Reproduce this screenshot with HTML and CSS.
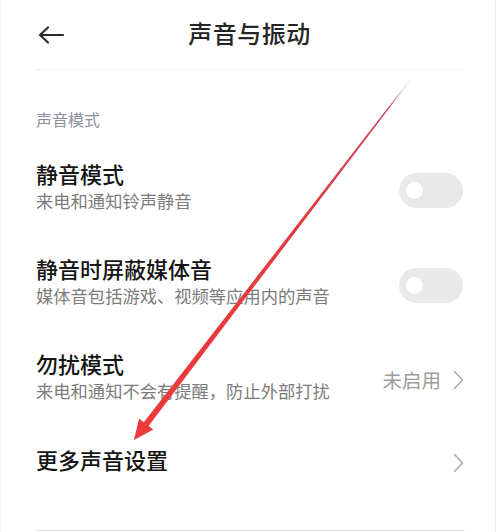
FILE: index.html
```html
<!DOCTYPE html>
<html lang="zh-CN">
<head>
<meta charset="utf-8">
<title>声音与振动</title>
<link rel="stylesheet" href="styles.css">
</head>
<body>
<div class="page">
  <header class="header">
    <svg class="back" width="26" height="18" viewBox="0 0 26 18">
      <path d="M25 9 H2 M10 1.5 L2 9 L10 16.5" fill="none" stroke="#2b2b2b" stroke-width="2.2" stroke-linecap="round" stroke-linejoin="round"/>
    </svg>
    <h1 class="title">声音与振动</h1>
    <span class="spacer"></span>
  </header>
  <div class="divider"></div>

  <div class="section-label">声音模式</div>

  <div class="row">
    <div class="texts">
      <div class="row-title">静音模式</div>
      <div class="row-sub">来电和通知铃声静音</div>
    </div>
    <div class="toggle"><span class="knob"></span></div>
  </div>

  <div class="row">
    <div class="texts">
      <div class="row-title">静音时屏蔽媒体音</div>
      <div class="row-sub">媒体音包括游戏、视频等应用内的声音</div>
    </div>
    <div class="toggle"><span class="knob"></span></div>
  </div>

  <div class="row">
    <div class="texts">
      <div class="row-title">勿扰模式</div>
      <div class="row-sub">来电和通知不会有提醒，防止外部打扰</div>
    </div>
    <div class="value">
      <span class="value-text">未启用</span>
      <svg class="chev" width="11" height="20" viewBox="0 0 11 20"><path d="M1.5 1.5 L9.5 10 L1.5 18.5" fill="none" stroke="#ababab" stroke-width="1.6" stroke-linecap="round" stroke-linejoin="round"/></svg>
    </div>
  </div>

  <div class="row single">
    <div class="texts">
      <div class="row-title">更多声音设置</div>
    </div>
    <div class="value">
      <svg class="chev" width="11" height="20" viewBox="0 0 11 20"><path d="M1.5 1.5 L9.5 10 L1.5 18.5" fill="none" stroke="#ababab" stroke-width="1.6" stroke-linecap="round" stroke-linejoin="round"/></svg>
    </div>
  </div>

  <div class="divider bottom"></div>
</div>

<svg class="annotation" width="500" height="532" viewBox="0 0 500 532">
  <defs>
    <linearGradient id="arrowGrad" gradientUnits="userSpaceOnUse" x1="410" y1="80" x2="134" y2="440">
      <stop offset="0" stop-color="#f2d4d8" stop-opacity="0.4"/>
      <stop offset="0.08" stop-color="#c9405c"/>
      <stop offset="0.35" stop-color="#e23a42"/>
      <stop offset="1" stop-color="#ec3b3b"/>
    </linearGradient>
  </defs>
  <polygon points="409.6,79.7 410.4,80.3 148.6,425.9 153.3,429.6 134,440 139.1,418.6 143.8,422.3" fill="url(#arrowGrad)"/>
</svg>
</body>
</html>
```

FILE: styles.css
```css
html, body {
  margin: 0;
  padding: 0;
  background: #ffffff;
}

body {
  width: 500px;
  height: 532px;
  overflow: hidden;
  position: relative;
  font-family: "Noto Sans CJK SC", "Noto Sans", sans-serif;
}

.page {
  box-sizing: border-box;
  width: 496px;
  height: 532px;
  border-left: 1px solid #f0f0f0;
  border-right: 1px solid #ececec;
  padding: 0 32px 0 35px;
  background: #ffffff;
}

.header {
  height: 69px;
  display: grid;
  grid-template-columns: 1fr auto 1fr;
  align-items: center;
}

.back {
  margin-left: 2px;
  display: block;
}

.title {
  margin: 0 0 4px;
  font-size: 24px;
  line-height: 32px;
  font-weight: 500;
  color: #252525;
  letter-spacing: 0.5px;
}

.divider {
  height: 1px;
  background: #efefef;
  margin-right: -2px;
}

.divider.bottom {
  margin-top: 33px;
  background: #e4e4e4;
}

.section-label {
  margin-top: 38px;
  font-size: 16px;
  line-height: 22px;
  color: #8c8f9e;
}

.row {
  display: flex;
  align-items: center;
  justify-content: space-between;
  padding: 20px 0 21px;
}

.section-label + .row {
  margin-top: 13px;
}

.row.single {
  padding: 21px 0 21px;
}

.texts {
  margin: -3px 0 3px;
}

.row-title {
  font-size: 22px;
  line-height: 27px;
  font-weight: 500;
  color: #151515;
}

.row-sub {
  margin-top: 1px;
  font-size: 17.3px;
  line-height: 26px;
  color: #7c7c7c;
}

.toggle {
  width: 64px;
  height: 35px;
  border-radius: 18px;
  background: #e9e9e9;
  display: flex;
  align-items: center;
  padding-left: 7px;
  box-sizing: border-box;
}

.knob {
  width: 17px;
  height: 17px;
  border-radius: 50%;
  background: #ffffff;
}

.value {
  display: flex;
  align-items: center;
  gap: 12px;
  margin-right: -1px;
}

.value-text {
  font-size: 19.5px;
  line-height: 26px;
  color: #9c9c9c;
}

.chev {
  display: block;
}

.annotation {
  position: absolute;
  left: 0;
  top: 0;
  pointer-events: none;
}
```
